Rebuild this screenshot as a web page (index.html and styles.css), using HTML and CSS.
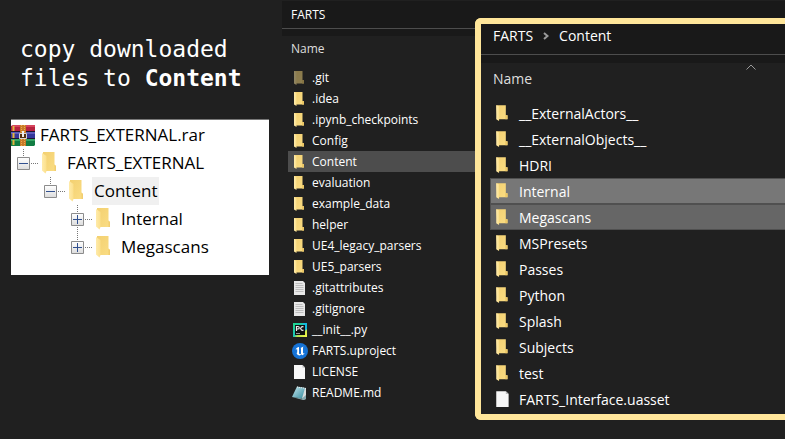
FILE: index.html
```html
<!DOCTYPE html>
<html lang="en">
<head>
<meta charset="utf-8">
<title>Copy downloaded files</title>
<link rel="stylesheet" href="styles.css">
</head>
<body>
<svg class="defs" aria-hidden="true">
  <defs>
    <linearGradient id="gold" x1="0" x2="1" y1="0" y2="1"><stop offset="0" stop-color="#f3d071"/><stop offset="1" stop-color="#fadd84"/></linearGradient>
    <linearGradient id="flapfill" x1="0" x2="1" y1="0" y2="0"><stop offset="0" stop-color="#ffebaa"/><stop offset="1" stop-color="#fbdf8b"/></linearGradient>
    <linearGradient id="pad" x1="0" x2="1" y1="0" y2="1"><stop offset="0" stop-color="#c8e9ef"/><stop offset="1" stop-color="#348b9e"/></linearGradient>
    <linearGradient id="pycharm" x1="0" x2="1" y1="0" y2="1"><stop offset="0" stop-color="#21d789"/><stop offset=".5" stop-color="#1cc4b8"/><stop offset=".62" stop-color="#b5e04a"/><stop offset="1" stop-color="#fcf84a"/></linearGradient>
    <linearGradient id="box" x1="0" x2="0" y1="0" y2="1"><stop offset="0" stop-color="#fff"/><stop offset="1" stop-color="#dcdcdc"/></linearGradient>
  </defs>
  <symbol id="folder" viewBox="0 0 16 16">
    <path d="M2 1h8.500v9H12v3.500H3z" fill="url(#gold)"/>
    <path d="M10 10h2v3.500h-2z" fill="#ecc766"/>
    <path d="M2 1l2.500 1v13L2 13.500z" fill="url(#flapfill)"/>
  </symbol>
  <symbol id="bigfolder" viewBox="0 0 14 22">
    <path d="M1 0h11.500v12.500L14 14v5H3L1 17z" fill="url(#gold)"/>
    <path d="M12.500 12.500L14 14v5h-1.500z" fill="#f2cd70"/>
    <path d="M0 1l4.500 3v15L3.500 21.500 0 18.500z" fill="url(#flapfill)"/>
  </symbol>
  <symbol id="page" viewBox="0 0 16 16">
    <path d="M2 1h8.500L13 3.500V15H2z" fill="#f7f7f7"/>
    <path d="M10.500 1v2.500H13z" fill="#b9b9b9"/>
  </symbol>
  <symbol id="textpage" viewBox="0 0 16 16">
    <path d="M2 1h9l2 2v12H2z" fill="#e8e8e8"/>
    <path d="M3.500 3.500h7M3.500 5.500h8M3.500 7.500h8M3.500 9.500h8M3.500 11.500h8" stroke="#bdbdbd" fill="none"/>
  </symbol>
  <symbol id="python" viewBox="0 0 16 16">
    <path d="M1 1h14v14H1z" fill="url(#pycharm)"/>
    <path d="M11 1h4v6l-3 3z" fill="#15b8dc"/>
    <path d="M3 3h10v10H3z" fill="#101010"/>
    <path d="M4.500 9V4.500h1.500a1.200 1.200 0 0 1 0 2.500H4.500M11.500 5a1.800 1.800 0 1 0 0 3" fill="none" stroke="#eee" stroke-width="1.200"/>
    <path d="M4 11.500h4" stroke="#999"/>
  </symbol>
  <symbol id="unreal" viewBox="0 0 16 16">
    <circle cx="8" cy="8" r="8" fill="#1673d6"/>
    <path d="M3.500 6.500C4.500 5 5.500 4.300 7 4v6.500c.8.900 1.500.6 2 .2V5.500L8.500 5 11.500 3.500l-.5 1v5.500l.4.500 1.200-.6c-.7 1.400-1.600 2-2.400 2.300l-1-.9-1.300 1.300C6 12.500 4.800 11.500 4.600 10l.6-.5V6.300z" fill="#fff"/>
  </symbol>
  <symbol id="notepad" viewBox="0 0 16 16">
    <path d="M5 2l9 1v11l-3 1z" fill="#d9dddd"/>
    <path d="M5 1.500L13 3l-3 10.500L0 12z" fill="url(#pad)"/>
    <path d="M0 12l10 1.500 4-3.500v4l-3 1z" fill="#86a8ae"/>
    <path d="M5 2l9 1.500" stroke="#eee" stroke-dasharray="1 1"/>
  </symbol>
</svg>

<main class="stage">
  <section class="guide">
    <h1 class="caption">copy downloaded<br>files to <b>Content</b></h1>
    <div class="archive">
      <div class="node root">
        <svg class="rar" viewBox="0 0 24 21" aria-hidden="true">
          <path d="M0 1l2-1h22v7H0z" fill="#b72240"/><path d="M2 0h22v2H2z" fill="#d6455d"/>
          <path d="M0 7h24v7H0z" fill="#34369b"/><path d="M0 7h24v2H0z" fill="#5c5dbb"/>
          <path d="M0 14h24v6l-1 1H0z" fill="#137d43"/><path d="M0 14h24v2H0z" fill="#37a565"/>
          <path d="M0 6.500h24M0 13.500h24" stroke="#1c1430"/>
          <path d="M2.500 1v5M2.500 8v5M2.500 15v5" stroke="#e2b33e" stroke-width="2"/>
          <path d="M9 0h6v21H9z" fill="#c87b29"/><path d="M10.500 0v21M13.500 0v21" stroke="#edab4b" stroke-dasharray="1 1"/>
          <path d="M8 8h8v6H8z" fill="#54300f"/><path d="M8.500 8.500h7v5h-7z" fill="none" stroke="#d6d6d6"/>
          <path d="M12 6v6" stroke="#eee" stroke-width="2"/>
        </svg>
        <span>FARTS_EXTERNAL.rar</span>
      </div>
      <ul class="branch">
        <li>
          <div class="node">
            <button class="toggle" aria-label="Collapse FARTS_EXTERNAL"><svg viewBox="0 0 22 28"><path d="M6.500 0v8M14 14.500h8" class="dots"/><path d="M.5 8.500h12v12H.5z" class="box"/><path d="M2 14.500h9" class="sign"/></svg></button>
            <svg class="bigfolder" aria-hidden="true"><use href="#bigfolder"/></svg><span class="label">FARTS_EXTERNAL</span>
          </div>
          <ul class="branch">
            <li>
              <div class="node">
                <button class="toggle" aria-label="Collapse Content"><svg viewBox="0 0 22 28"><path d="M6.500 0v8M14 14.500h8" class="dots"/><path d="M.5 8.500h12v12H.5z" class="box"/><path d="M2 14.500h9" class="sign"/></svg></button>
                <svg class="bigfolder" aria-hidden="true"><use href="#bigfolder"/></svg><span class="label current">Content</span>
              </div>
              <ul class="branch">
                <li class="node">
                  <button class="toggle" aria-label="Expand Internal"><svg viewBox="0 0 22 28"><path d="M6.500 0v28M14 14.500h8" class="dots"/><path d="M.5 8.500h12v12H.5z" class="box"/><path d="M2 14.500h9M6.500 10v9" class="sign"/></svg></button>
                  <svg class="bigfolder" aria-hidden="true"><use href="#bigfolder"/></svg><span class="label">Internal</span>
                </li>
                <li class="node">
                  <button class="toggle" aria-label="Expand Megascans"><svg viewBox="0 0 22 28"><path d="M6.500 0v8M14 14.500h8" class="dots"/><path d="M.5 8.500h12v12H.5z" class="box"/><path d="M2 14.500h9M6.500 10v9" class="sign"/></svg></button>
                  <svg class="bigfolder" aria-hidden="true"><use href="#bigfolder"/></svg><span class="label">Megascans</span>
                </li>
              </ul>
            </li>
          </ul>
        </li>
      </ul>
    </div>
  </section>

  <section class="explorer project">
    <header class="address"><nav class="crumbs">FARTS</nav></header>
    <div class="column">Name</div>
    <ul class="files">
      <li class="hidden"><svg><use href="#folder"/></svg>.git</li>
      <li><svg><use href="#folder"/></svg>.idea</li>
      <li><svg><use href="#folder"/></svg>.ipynb_checkpoints</li>
      <li><svg><use href="#folder"/></svg>Config</li>
      <li class="selected"><svg><use href="#folder"/></svg>Content</li>
      <li><svg><use href="#folder"/></svg>evaluation</li>
      <li><svg><use href="#folder"/></svg>example_data</li>
      <li><svg><use href="#folder"/></svg>helper</li>
      <li><svg><use href="#folder"/></svg>UE4_legacy_parsers</li>
      <li><svg><use href="#folder"/></svg>UE5_parsers</li>
      <li><svg><use href="#textpage"/></svg>.gitattributes</li>
      <li><svg><use href="#textpage"/></svg>.gitignore</li>
      <li><svg><use href="#python"/></svg>__init__.py</li>
      <li><svg><use href="#unreal"/></svg>FARTS.uproject</li>
      <li><svg><use href="#page"/></svg>LICENSE</li>
      <li><svg><use href="#notepad"/></svg>README.md</li>
    </ul>
  </section>

  <section class="explorer content">
    <header class="address"><nav class="crumbs">FARTS <svg class="chevron" viewBox="0 0 6 8" aria-hidden="true"><path d="M1 1l3.500 3L1 7"/></svg> Content</nav></header>
    <div class="column"><span>Name</span><svg class="sort" viewBox="0 0 10 6" aria-hidden="true"><path d="M.5 5.500L5 1l4.500 4.500"/></svg></div>
    <ul class="files">
      <li><svg><use href="#folder"/></svg>__ExternalActors__</li>
      <li><svg><use href="#folder"/></svg>__ExternalObjects__</li>
      <li><svg><use href="#folder"/></svg>HDRI</li>
      <li class="selected focused"><svg><use href="#folder"/></svg>Internal</li>
      <li class="selected"><svg><use href="#folder"/></svg>Megascans</li>
      <li><svg><use href="#folder"/></svg>MSPresets</li>
      <li><svg><use href="#folder"/></svg>Passes</li>
      <li><svg><use href="#folder"/></svg>Python</li>
      <li><svg><use href="#folder"/></svg>Splash</li>
      <li><svg><use href="#folder"/></svg>Subjects</li>
      <li><svg><use href="#folder"/></svg>test</li>
      <li><svg><use href="#page"/></svg>FARTS_Interface.uasset</li>
    </ul>
  </section>
</main>
</body>
</html>
```
FILE: styles.css
```css
* { box-sizing: border-box; }
body {
  margin: 0;
  background: #202020;
  color: #fff;
  font-family: "Open Sans", "Noto Sans", sans-serif;
}
ul { list-style: none; margin: 0; padding: 0; }
.defs { position: absolute; width: 0; height: 0; }

.stage {
  display: grid;
  grid-template-columns: minmax(0, 282fr) minmax(0, 193fr) minmax(0, 310fr);
  align-items: start;
  min-height: 100vh;
}

/* Instructions and archive tree */
.guide { grid-column: 1; grid-row: 1; padding: 35px 13px 0 11px; }
.caption {
  margin: 0 0 26px;
  padding-left: 9px;
  font: 400 23px/29px "DejaVu Sans Mono", monospace;
  white-space: nowrap;
}
.archive {
  padding: 1px 0 14px;
  border-top: 1px solid #777;
  background: #fff;
  color: #000;
  font-size: 17px;
  line-height: 28px;
}
.node { display: flex; align-items: center; height: 28px; white-space: nowrap; }
.root { gap: 5px; }
.rar { width: 24px; height: 21px; }
.branch .branch { padding-left: 27px; }
.archive > .branch { padding-left: 6px; }
.toggle { padding: 0; border: 0; background: none; width: 22px; height: 28px; margin-right: 3px; }
.toggle svg { display: block; width: 22px; height: 28px; }
.dots { stroke: #777; stroke-dasharray: 1 1; fill: none; }
.box { fill: url(#box); stroke: #8c8c8c; }
.sign { stroke: #31508f; fill: none; }
.bigfolder { width: 14px; height: 22px; margin-right: 9px; }
.label { padding: 0 2px; }
.current { background: #f0f0f0; }

/* File windows */
.explorer { background: #202020; }
.address { background: #191919; }
.crumbs { display: flex; align-items: center; border-bottom: 1px solid #4d4d4d; }
.column { color: #dedede; }
.files li { display: flex; align-items: center; white-space: nowrap; }
.files svg { width: 16px; height: 16px; flex: none; }
.hidden svg { opacity: .5; }
.chevron, .sort { fill: none; stroke: #9a9a9a; }

.project { grid-column: 2 / 4; grid-row: 1; font-size: 12px; padding-top: 1px; }
.project .address { padding-bottom: 7px; }
.project .crumbs { height: 28px; padding-left: 9px; }
.project .column { padding: 0 9px 5px; line-height: 26px; }
.project .files { padding-left: 6px; }
.project .files li { height: 21px; gap: 4px; padding-left: 4px; }
.project .selected { background: #4d4d4d; }

.content {
  grid-column: 3;
  grid-row: 1;
  z-index: 1;
  margin-top: 18px;
  padding-bottom: 2px;
  border: 6px solid #ffe69a;
  border-right: 0;
  border-radius: 6px 0 0 6px;
  font-size: 14px;
}
.content .address { padding-bottom: 8px; }
.content .crumbs { height: 31px; padding: 0 12px 7px; gap: 10px; }
.chevron { width: 6px; height: 8px; stroke-width: 2; }
.content .column { display: flex; height: 37px; padding: 0 12px; line-height: 32px; }
.sort { width: 10px; height: 6px; margin: 1px 17px 0 auto; }
.content .files { padding-left: 9px; }
.content .files li { height: 26px; gap: 7px; padding-left: 4px; }
.content .files svg { width: 18px; height: 18px; }
.content .files .selected { background: #666; border: 1px solid #505050; border-right: 0; padding-left: 3px; }
.content .files .focused { background: #777; }
```
